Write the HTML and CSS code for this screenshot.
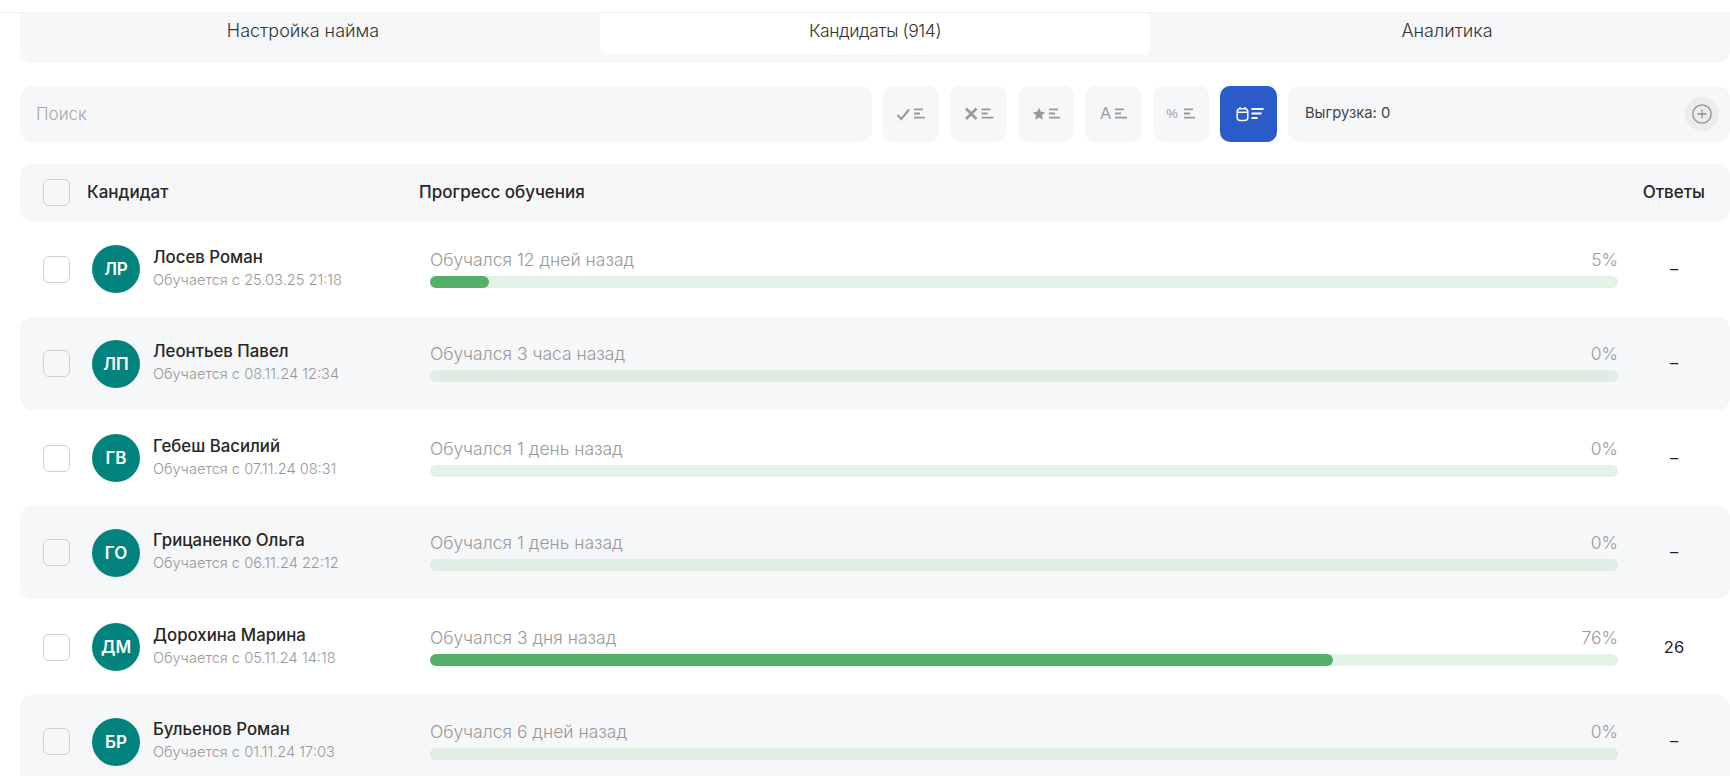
FILE: index.html
```html
<!DOCTYPE html>
<html lang="ru">
<head>
<meta charset="utf-8">
<title>Кандидаты</title>
<link rel="stylesheet" href="styles.css">
</head>
<body>
<div class="topline"></div>
<main class="page">
  <nav class="tabs">
    <div class="tab first">Настройка найма</div>
    <div class="tab active">Кандидаты (914)</div>
    <div class="tab last">Аналитика</div>
  </nav>
  <section class="toolbar">
    <div class="search">Поиск</div>
    <button class="tool"><svg class="ico" viewBox="0 0 30 14"><path class="st" d="M1.500 8l3.700 4.200L13 2.500"/><path class="ln" d="M18 2.300h9M18 6.500h6M18 10.700h11"/></svg></button>
    <button class="tool"><svg class="ico" viewBox="0 0 30 14"><path class="st thick" d="M2 1.500l10.500 10.500M12.500 1.500l-10.500 10.500"/><path class="ln" d="M17.500 2.300h9M17.500 6.500h6M17.500 10.700h12"/></svg></button>
    <button class="tool"><svg class="ico" viewBox="0 0 30 14"><path class="fl" d="M8 .8l1.900 4 4.300.5-3.200 3 .9 4.400L8 10.500l-3.900 2.200.9-4.400-3.200-3 4.300-.5z"/><path class="ln" d="M18 2.300h9M18 6.500h6M18 10.700h11"/></svg></button>
    <button class="tool tight"><span class="glyph big">A</span><svg class="lines" viewBox="0 0 12 14"><path class="ln" d="M0 2.300h9M0 6.500h6M0 10.700h12"/></svg></button>
    <button class="tool wide"><span class="glyph">%</span><svg class="lines" viewBox="0 0 12 14"><path class="ln" d="M0 2.300h9M0 6.500h6M0 10.700h11"/></svg></button>
    <button class="tool on"><svg class="ico" viewBox="0 0 30 16"><rect class="wh" x="3.200" y="2.800" width="10.600" height="11.700" rx="3"/><path class="wh" d="M3.200 6.300h10.600M6 1v2M11 1v2"/><path class="wh lnw" d="M17.500 3h12M17.500 7.500h10M17.500 12h6"/></svg></button>
    <div class="export"><span>Выгрузка: 0</span><span class="plus"><svg viewBox="0 0 20 20"><circle cx="10" cy="10" r="9.200"/><path d="M10 5.500v9M5.500 10h9"/></svg></span></div>
  </section>
  <header class="thead">
    <span class="check"></span>
    <span class="th th-name">Кандидат</span>
    <span class="th th-prog">Прогресс обучения</span>
    <span class="th th-ans">Ответы</span>
  </header>
  <article class="row">
    <span class="check"></span><span class="avatar">ЛР</span>
    <div class="who"><div class="name">Лосев Роман</div><div class="since">Обучается с 25.03.25 21:18</div></div>
    <div class="prog"><div class="meta"><span>Обучался 12 дней назад</span><span>5%</span></div><div class="bar"><div class="fill" style="width:5%"></div></div></div>
    <div class="ans">–</div>
  </article>
  <article class="row alt">
    <span class="check"></span><span class="avatar">ЛП</span>
    <div class="who"><div class="name">Леонтьев Павел</div><div class="since">Обучается с 08.11.24 12:34</div></div>
    <div class="prog"><div class="meta"><span>Обучался 3 часа назад</span><span>0%</span></div><div class="bar"></div></div>
    <div class="ans">–</div>
  </article>
  <article class="row">
    <span class="check"></span><span class="avatar">ГВ</span>
    <div class="who"><div class="name">Гебеш Василий</div><div class="since">Обучается с 07.11.24 08:31</div></div>
    <div class="prog"><div class="meta"><span>Обучался 1 день назад</span><span>0%</span></div><div class="bar"></div></div>
    <div class="ans">–</div>
  </article>
  <article class="row alt">
    <span class="check"></span><span class="avatar">ГО</span>
    <div class="who"><div class="name">Грицаненко Ольга</div><div class="since">Обучается с 06.11.24 22:12</div></div>
    <div class="prog"><div class="meta"><span>Обучался 1 день назад</span><span>0%</span></div><div class="bar"></div></div>
    <div class="ans">–</div>
  </article>
  <article class="row">
    <span class="check"></span><span class="avatar">ДМ</span>
    <div class="who"><div class="name">Дорохина Марина</div><div class="since">Обучается с 05.11.24 14:18</div></div>
    <div class="prog"><div class="meta"><span>Обучался 3 дня назад</span><span>76%</span></div><div class="bar"><div class="fill" style="width:76%"></div></div></div>
    <div class="ans">26</div>
  </article>
  <article class="row alt">
    <span class="check"></span><span class="avatar">БР</span>
    <div class="who"><div class="name">Бульенов Роман</div><div class="since">Обучается с 01.11.24 17:03</div></div>
    <div class="prog"><div class="meta"><span>Обучался 6 дней назад</span><span>0%</span></div><div class="bar"></div></div>
    <div class="ans">–</div>
  </article>
</main>
</body>
</html>
```
FILE: styles.css
```css
* { box-sizing: border-box; }
html, body { margin: 0; height: 776px; overflow: hidden; background: #fff; }
body { font-family: Inter, "Noto Sans", sans-serif; color: #222; }
.topline { height: 13px; border-bottom: 1px solid #f1f2f4; }
.page { padding-left: 20px; }

.tabs { display: grid; grid-template-columns: repeat(3, 1fr); height: 50px; background: #f6f7f9; border-radius: 0 0 12px 12px; }
.tab { height: 42px; display: flex; align-items: flex-start; justify-content: center; padding-top: 7px; font-size: 18px; font-weight: 300; color: #333; }
.tab.first { padding-right: 4px; }
.tab.last { padding-left: 4px; }
.tab.active { margin: 0 10px; background: #fff; border-radius: 4px 4px 8px 8px; font-size: 17.500px; letter-spacing: -.4px; }

.toolbar { display: flex; gap: 11px; height: 56px; margin-top: 23px; }
.search { width: 851.900px; background: #f6f7f9; border-radius: 12px; padding-left: 16px; display: flex; align-items: center; font-size: 17px; font-weight: 300; color: #a6a6a6; }
.tool { width: 56.500px; flex: none; border: 0; padding: 0; background: #f6f7f9; border-radius: 10px; display: flex; align-items: center; justify-content: center; gap: 4px; }
.tool.wide { gap: 6px; }
.tool.on { background: #2a5bc9; }
.ico { width: 30px; height: 14px; }
.tool.on .ico { height: 16px; }
.lines { width: 12px; height: 14px; }
.st { fill: none; stroke: #999; stroke-width: 2; }
.st.thick { stroke-width: 2.600; }
.fl { fill: #999; }
.ln { fill: none; stroke: #999; stroke-width: 1.800; }
.wh { fill: none; stroke: #fff; stroke-width: 1.500; }
.lnw { stroke-width: 2; }
.glyph { font-size: 13px; color: #999; font-weight: 400; line-height: 14px; }
.glyph.big { font-size: 16px; }
.export { flex: 1; background: #f6f7f9; border-radius: 12px; display: flex; align-items: center; justify-content: space-between; padding: 0 11px 0 17px; font-size: 14.800px; color: #444; }
.export > span:first-child { margin-bottom: 2px; }
.plus { width: 34px; height: 34px; border-radius: 50%; background: #ececee; display: flex; align-items: center; justify-content: center; }
.plus svg { width: 20px; height: 20px; fill: none; stroke: #8f8f8f; stroke-width: 1.300; }

.thead { display: flex; align-items: center; height: 57px; margin-top: 22px; padding: 0 25px 0 23px; background: #f6f7f9; border-radius: 12px; }
.check { flex: none; width: 27px; height: 27px; border: 1px solid #cfd0d2; border-radius: 6px; }
.th { font-size: 17px; font-weight: 500; color: #262626; margin-bottom: 2px; }
.th-name { margin-left: 17px; width: 332px; }
.th-prog { flex: 1; }

.row { display: flex; align-items: center; height: 93px; margin-top: 1.500px; padding-left: 23px; border-radius: 12px; }
.row.alt { background: #f6f7f9; }
.avatar { flex: none; width: 48px; height: 48px; margin-left: 22px; border-radius: 50%; background: #02837d; color: #fff; display: flex; align-items: center; justify-content: center; font-size: 17px; font-weight: 600; }
.who { width: 277px; flex: none; margin-left: 13px; padding-bottom: 2px; }
.name { font-size: 16.800px; font-weight: 500; line-height: 20px; color: #262626; }
.since { font-size: 14.600px; font-weight: 300; line-height: 20px; margin-top: 3px; color: #989898; }
.prog { width: 1188px; flex: none; }
.meta { display: flex; justify-content: space-between; font-size: 17.500px; font-weight: 300; line-height: 18px; color: #999; margin-bottom: 7px; }
.bar { height: 12px; border-radius: 6px; background: #e4f2e6; }
.alt .bar { background: #dfede4; }
.fill { height: 100%; border-radius: 6px; background: #54b068; }
.ans { flex: 1; text-align: center; font-size: 16.500px; font-weight: 400; color: #222; padding-bottom: 1px; }
```
